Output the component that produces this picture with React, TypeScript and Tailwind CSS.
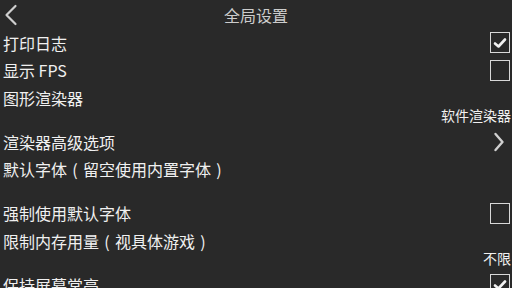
import React from 'react';

type Item =
  | { kind: 'check'; label: string; checked: boolean }
  | { kind: 'value'; label: string; value: string }
  | { kind: 'link'; label: string };

const items: Item[] = [
  { kind: 'check', label: '打印日志', checked: true },
  { kind: 'check', label: '显示 FPS', checked: false },
  { kind: 'value', label: '图形渲染器', value: '软件渲染器' },
  { kind: 'link', label: '渲染器高级选项' },
  { kind: 'value', label: '默认字体（留空使用内置字体）', value: '' },
  { kind: 'check', label: '强制使用默认字体', checked: false },
  { kind: 'value', label: '限制内存用量（视具体游戏）', value: '不限' },
  { kind: 'check', label: '保持屏幕常亮', checked: true },
];

// full-width parens get a full em box, centred, like the reference
function Label({ text }: { text: string }) {
  const parts = text.split(/([（）])/);
  return (
    <span className="text-[16px] leading-none whitespace-nowrap">
      {parts.map((p, i) =>
        p === '（' || p === '）' ? (
          <span key={i} className="inline-block w-[1em] text-center">
            {p === '（' ? '(' : ')'}
          </span>
        ) : (
          <React.Fragment key={i}>{p}</React.Fragment>
        )
      )}
    </span>
  );
}

function CheckBox({ checked }: { checked: boolean }) {
  return (
    <div className="w-[20px] h-[21px] border-[1.5px] border-[#d8d8d8] flex items-center justify-center">
      {checked && (
        <svg width="14" height="12" viewBox="0 0 14 12">
          <path d="M2 6.5 L5.5 9.5 L12 2.5" fill="none" stroke="#f2f2f2" strokeWidth="2.6" strokeLinecap="round" strokeLinejoin="round" />
        </svg>
      )}
    </div>
  );
}

export default function App() {
  return (
    <div
      className="w-[512px] h-[288px] overflow-hidden bg-[#292929] text-[#f0f0f0] flex flex-col"
      style={{ fontFamily: '"Noto Sans CJK SC", "Noto Sans", sans-serif' }}
    >
      <header className="h-[29px] shrink-0 grid grid-cols-[1fr_auto_1fr] items-center">
        <div className="pl-[4px] flex items-center">
          <svg width="14" height="22" viewBox="0 0 14 22">
            <path d="M11.5 2 L2.5 11 L11.5 20" fill="none" stroke="#cfcfcf" strokeWidth="2.2" strokeLinecap="round" strokeLinejoin="round" />
          </svg>
        </div>
        <span className="text-[16px] text-[#cccccc] leading-none">全局设置</span>
        <div />
      </header>

      <main className="flex flex-col">
        {items.map((it, idx) => {
          if (it.kind === 'value') {
            return (
              <div key={idx} className="flex flex-col h-[44px] shrink-0">
                <div className="h-[27px] flex items-center pl-[3px]">
                  <Label text={it.label} />
                </div>
                <div className="h-[12px] -mt-[2px] flex items-center justify-end pr-[1px] text-[14px] leading-none">
                  {it.value}
                </div>
              </div>
            );
          }
          return (
            <div key={idx} className="h-[27.5px] shrink-0 flex items-center justify-between pl-[3px] pr-[2px]">
              <Label text={it.label} />
              {it.kind === 'check' ? (
                <CheckBox checked={it.checked} />
              ) : (
                <svg width="12" height="20" viewBox="0 0 12 20" className="mr-[5px]">
                  <path d="M2.5 2 L9.5 10 L2.5 18" fill="none" stroke="#d0d0d0" strokeWidth="2.4" strokeLinecap="round" strokeLinejoin="round" />
                </svg>
              )}
            </div>
          );
        })}
      </main>
    </div>
  );
}
